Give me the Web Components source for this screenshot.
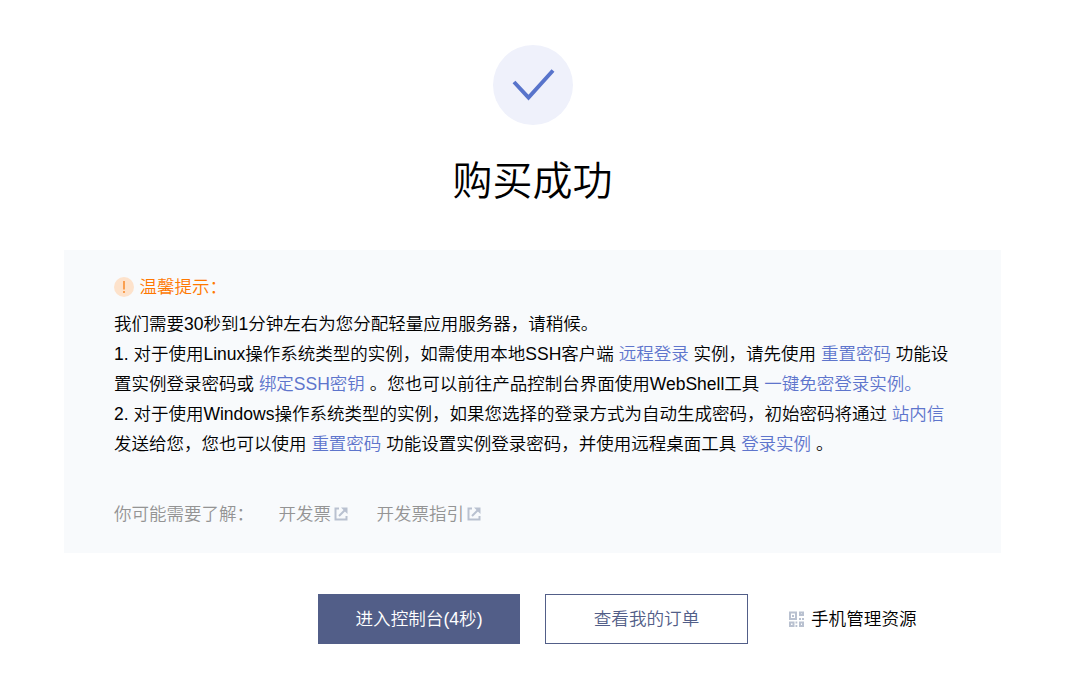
<!DOCTYPE html>
<html lang="zh-CN">
<head>
<meta charset="UTF-8">
<title>购买成功</title>
<style>
  :root {
    --color-primary: #525e88;
    --color-link: #5e75cc;
    --color-warning: #ff7800;
    --color-muted: #949494;
    --color-icon: #b9c1d0;
    --color-bg-panel: #f8fafc;
  }
  body {
    margin: 0;
    background: #fff;
    color: #000;
    font-family: "Liberation Sans", "Noto Sans CJK SC", sans-serif;
    font-size: 17.6px;
    font-weight: 350;
    line-height: 30px;
  }
</style>
</head>
<body>
<result-page>
  <result-header slot="header">购买成功</result-header>
  <tips-panel>
    <span slot="title">温馨提示：</span>
    <tips-line>我们需要30秒到1分钟左右为您分配轻量应用服务器，请稍候。</tips-line>
    <tips-line>1. 对于使用Linux操作系统类型的实例，如需使用本地SSH客户端 <text-link>远程登录</text-link> 实例，请先使用 <text-link>重置密码</text-link> 功能设</tips-line>
    <tips-line>置实例登录密码或 <text-link>绑定SSH密钥</text-link> 。您也可以前往产品控制台界面使用WebShell工具 <text-link>一键免密登录实例。</text-link></tips-line>
    <tips-line>2. 对于使用Windows操作系统类型的实例，如果您选择的登录方式为自动生成密码，初始密码将通过 <text-link>站内信</text-link></tips-line>
    <tips-line>发送给您，您也可以使用 <text-link>重置密码</text-link> 功能设置实例登录密码，并使用远程桌面工具 <text-link>登录实例</text-link> 。</tips-line>
    <span slot="more">你可能需要了解：</span>
    <external-link slot="more">开发票</external-link>
    <external-link slot="more">开发票指引</external-link>
  </tips-panel>
  <action-button slot="actions" variant="primary">进入控制台(4秒)</action-button>
  <action-button slot="actions" variant="outline">查看我的订单</action-button>
  <mobile-entry slot="actions">手机管理资源</mobile-entry>
</result-page>

<script>
// Base element: renders the static template of each component
class BaseElement extends HTMLElement {
  constructor() {
    super();
    this.attachShadow({ mode: 'open' });
    this.shadowRoot.innerHTML = this.constructor.template;
  }
}

class ResultPage extends BaseElement {
  static template = /*html*/`
    <style>
      :host {
        display: block;
        width: 937px;
        padding: 45px 64px 0;
      }
      .actions {
        display: flex;
        align-items: center;
        margin: 41px 0 0 254px;
      }
    </style>
    <slot name="header"></slot>
    <slot></slot>
    <div class="actions"><slot name="actions"></slot></div>
  `;
}

class ResultHeader extends BaseElement {
  static template = /*html*/`
    <style>
      :host {
        display: flex;
        flex-direction: column;
        align-items: center;
      }
      svg { display: block; width: 80px; height: 80px; }
      h1 {
        margin: 26px 0 39px;
        font-size: 40px;
        font-weight: inherit;
        line-height: 60px;
      }
    </style>
    <svg viewBox="0 0 80 80">
      <circle cx="40" cy="40" r="40" fill="#eff1fb"/>
      <path d="M21 37L35.500 52.500L60 25.500" fill="none" stroke="#5874cb" stroke-width="3.900"/>
    </svg>
    <h1><slot></slot></h1>
  `;
}

class TipsPanel extends BaseElement {
  static template = /*html*/`
    <style>
      :host {
        display: block;
        box-sizing: border-box;
        height: 303px;
        padding: 22px 50px 0;
        background: var(--color-bg-panel);
        font-size: 17.51px;
      }
      .title {
        display: flex;
        align-items: center;
        gap: 5.5px;
        margin-bottom: 7px;
        color: var(--color-warning);
      }
      .more {
        display: flex;
        margin-top: 40px;
        color: var(--color-muted);
      }
      svg { width: 20px; height: 20px; }
    </style>
    <div class="title">
      <svg viewBox="0 0 20 20">
        <circle cx="10" cy="10" r="10" fill="#fde2cb"/>
        <path d="M9 4h2v8.500H9zM9 14h2v2H9z" fill="#fa9f50"/>
      </svg>
      <slot name="title"></slot>
    </div>
    <slot></slot>
    <div class="more"><slot name="more"></slot></div>
  `;
}

class TipsLine extends BaseElement {
  static template = /*html*/`
    <style>
      :host { display: block; height: 30px; white-space: nowrap; }
    </style>
    <slot></slot>
  `;
}

class TextLink extends BaseElement {
  static template = /*html*/`
    <style>
      :host { display: inline; color: var(--color-link); cursor: pointer; }
    </style>
    <slot></slot>
  `;
}

class ExternalLink extends BaseElement {
  static template = /*html*/`
    <style>
      :host {
        display: flex;
        align-items: center;
        gap: 2.5px;
        margin: 0 4.5px 0 24.5px;
        cursor: pointer;
      }
      svg { width: 14px; height: 14px; }
    </style>
    <slot></slot>
    <svg viewBox="0 0 14 14" fill="none" stroke="var(--color-icon)" stroke-width="2">
      <path d="M5 1.500H1.500V12.500H12.500V9"/>
      <path d="M5 9L11 3"/>
      <path d="M7 .500H13.500V7L11.200 4.800L9 2.600Z" fill="var(--color-icon)" stroke="none"/>
    </svg>
  `;
}

class ActionButton extends BaseElement {
  static template = /*html*/`
    <style>
      :host { display: block; margin-right: 25px; }
      button {
        display: block;
        box-sizing: border-box;
        width: 202px;
        height: 50px;
        padding: 0;
        border: 1px solid var(--color-primary);
        border-radius: 0;
        font: inherit;
        cursor: pointer;
      }
      :host([variant="primary"]) button {
        background: var(--color-primary);
        color: #fff;
      }
      :host([variant="outline"]) button {
        width: 203px;
        background: #fff;
        color: var(--color-primary);
      }
    </style>
    <button><slot></slot></button>
  `;
}

class MobileEntry extends BaseElement {
  static template = /*html*/`
    <style>
      :host {
        display: flex;
        align-items: center;
        gap: 7px;
        margin-left: 16px;
      }
      svg { width: 15px; height: 16px; }
    </style>
    <svg viewBox="0 0 15 16" fill="none" stroke="var(--color-icon)" stroke-width="2">
      <path d="M1 1.500H7V8H1Z"/>
      <path d="M11 1.500H14V4H11ZM1 11.500H4.500V15H1ZM11 11.500H14V15H11Z"/>
      <path d="M3 4h2v2H3zM10 7h2v2h-2zM13 7h2v2h-2zM6.500 10.500h1.800v2H6.500zM6.500 14h1.800v2H6.500z" fill="var(--color-icon)" stroke="none"/>
    </svg>
    <slot></slot>
  `;
}

customElements.define('result-page', ResultPage);
customElements.define('result-header', ResultHeader);
customElements.define('tips-panel', TipsPanel);
customElements.define('tips-line', TipsLine);
customElements.define('text-link', TextLink);
customElements.define('external-link', ExternalLink);
customElements.define('action-button', ActionButton);
customElements.define('mobile-entry', MobileEntry);
</script>
</body>
</html>
